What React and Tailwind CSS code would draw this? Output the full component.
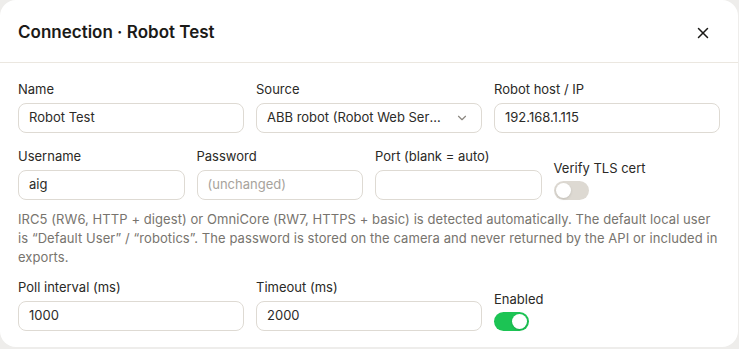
import { X, ChevronDown } from 'lucide-react';

const font = { fontFamily: 'Inter, "Noto Sans", sans-serif' };

function Field({ label, value, placeholder, select }) {
  return (
    <div className="flex min-w-0 flex-col">
      <span className="mb-[6px] text-[13px] leading-4 text-[#2a2926]">{label}</span>
      <div className="flex h-[30px] items-center rounded-lg border border-[#dedad3] bg-white px-[10px] text-[13px]">
        <span className={`min-w-0 flex-1 truncate ${value ? 'text-[#2c2b28]' : 'text-[#a7a39c]'}`}>
          {value || placeholder}
        </span>
        {select && <ChevronDown size={14} className="ml-3 mr-[2px] shrink-0 text-[#8b8780]" />}
      </div>
    </div>
  );
}

function Toggle({ label, on }) {
  return (
    <div className="flex flex-col justify-end">
      <span className="mb-[5px] text-[13px] leading-4 text-[#2a2926]">{label}</span>
      <div className={`flex h-[19px] w-[35px] items-center rounded-full px-[2px] ${on ? 'justify-end bg-[#1cc454]' : 'justify-start bg-[#ddd9d2]'}`}>
        <div className="h-[15px] w-[15px] rounded-full bg-white shadow-sm" />
      </div>
    </div>
  );
}

export default function App() {
  return (
    <div className="h-[349px] w-[739px] bg-[#eeedeb]" style={font}>
      <div className="w-[738px] overflow-hidden rounded-2xl bg-white">
        <div className="flex h-[63px] items-center justify-between border-b border-[#ebe7e0] pl-[18px] pr-[26px] pt-[4px]">
          <h1 className="text-[17px] font-semibold text-[#1b1a18]">Connection · Robot Test</h1>
          <X size={18} strokeWidth={2} className="text-[#1b1a18]" />
        </div>
        <div className="px-[18px] pb-[16px] pt-[18px]">
          <div className="grid grid-cols-3 gap-x-3">
            <Field label="Name" value="Robot Test" />
            <Field label="Source" value="ABB robot (Robot Web Services)" select />
            <Field label="Robot host / IP" value="192.168.1.115" />
          </div>
          <div className="mt-[15px] grid grid-cols-4 gap-x-3">
            <Field label="Username" value="aig" />
            <Field label="Password" placeholder="(unchanged)" />
            <Field label="Port (blank = auto)" placeholder="" />
            <Toggle label="Verify TLS cert" />
          </div>
          <p className="mt-[10px] text-[13px] leading-[19px] tracking-[0.07px] text-[#77746e]">
            IRC5 (RW6, HTTP + digest) or OmniCore (RW7, HTTPS + basic) is detected automatically. The default local user is “Default User” / “robotics”. The password is stored on the camera and never returned by the API or included in exports.
          </p>
          <div className="mt-[12px] grid grid-cols-3 gap-x-3">
            <Field label="Poll interval (ms)" value="1000" />
            <Field label="Timeout (ms)" value="2000" />
            <Toggle label="Enabled" on />
          </div>
        </div>
      </div>
    </div>
  );
}
